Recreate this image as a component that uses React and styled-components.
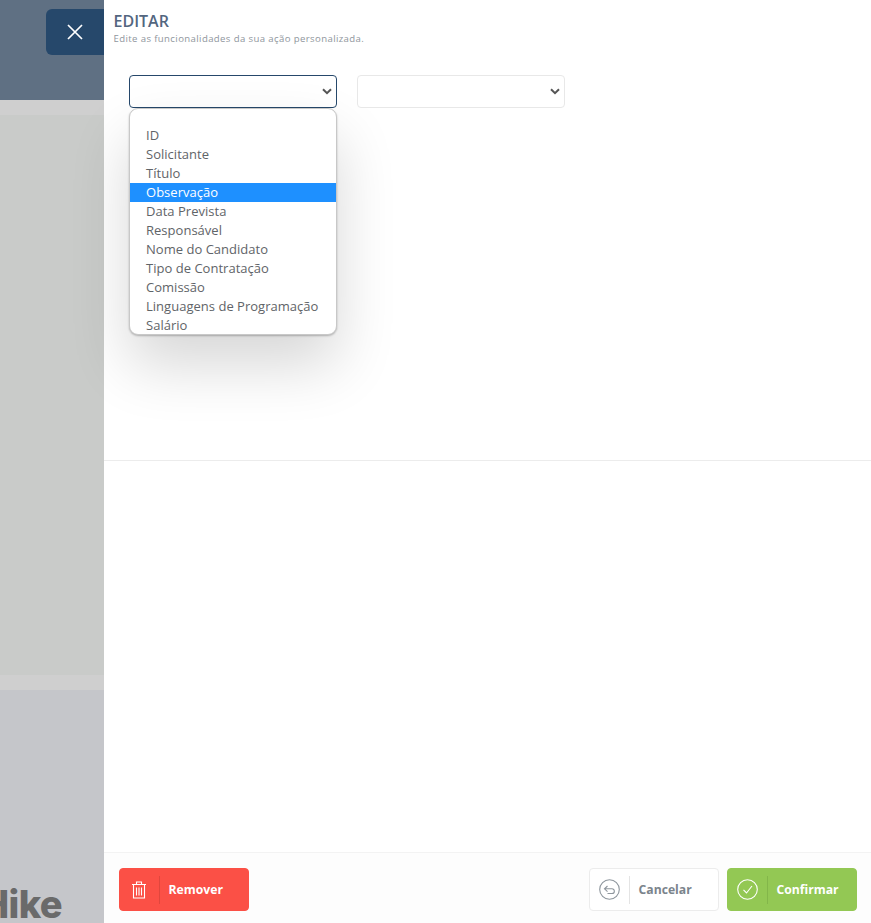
import React from "react";
import styled, { createGlobalStyle } from "styled-components";

const Global = createGlobalStyle`
  html, body { margin: 0; padding: 0; background: #fff; }
  body { font-family: "Open Sans", "Noto Sans", sans-serif; }
`;

const Page = styled.div`
  position: relative;
  width: 871px;
  height: 923px;
  display: flex;
  overflow: hidden;
`;

const Backdrop = styled.div`
  width: 104px;
  flex: none;
  display: flex;
  flex-direction: column;
  overflow: hidden;
`;

const Band = styled.div`
  height: ${(p) => p.$h}px;
  flex: ${(p) => (p.$h ? "none" : "1")};
  background: ${(p) => p.$c};
  display: flex;
  align-items: flex-end;
  justify-content: flex-end;
  overflow: hidden;
`;

const Logo = styled.span`
  font-family: "Inter", "Open Sans", sans-serif;
  font-weight: 800;
  font-size: 38px;
  line-height: 30px;
  letter-spacing: -0.6px;
  color: #6a6a6a;
  margin-right: 42px;
  margin-bottom: 4px;
  white-space: nowrap;
`;

const CloseButton = styled.button`
  position: absolute;
  left: 46px;
  top: 9px;
  width: 58px;
  height: 46px;
  padding: 0;
  border: 0;
  border-radius: 6px 0 0 6px;
  background: #26486b;
  display: flex;
  align-items: center;
  justify-content: center;
`;

const Panel = styled.main`
  flex: 1;
  display: flex;
  flex-direction: column;
  background: #fff;
  min-width: 0;
`;

const Header = styled.header`
  padding: 11px 10px 0 9.5px;
  height: 64px;
  box-sizing: border-box;
  flex: none;
`;

const Title = styled.h1`
  margin: 0;
  font-size: 16px;
  line-height: 20px;
  font-weight: 600;
  color: #53667f;
`;

const Subtitle = styled.p`
  margin: 1px 0 0;
  font-size: 9.6px;
  line-height: 13px;
  letter-spacing: 0.38px;
  color: #8f969d;
`;

const Editor = styled.section`
  height: 397px;
  flex: none;
  box-sizing: border-box;
  padding: 11px 25px 0;
  border-bottom: 1px solid #ececec;
  display: flex;
  gap: 20px;
  align-items: flex-start;
`;

const Field = styled.div`
  position: relative;
  width: 208px;
  flex: none;
`;

const Select = styled.select`
  display: block;
  width: 100%;
  height: 33px;
  box-sizing: border-box;
  appearance: none;
  background-color: #fff;
  border: 1px solid ${(p) => (p.$open ? "#26486b" : "#e8e8e8")};
  border-radius: 4px;
  font-family: inherit;
  font-size: 14px;
  color: #555;
  outline: none;
`;

const Chevron = styled.svg`
  position: absolute;
  right: 5px;
  top: 13px;
  width: 10px;
  height: 7px;
  pointer-events: none;
`;

const Menu = styled.ul`
  position: absolute;
  left: 0;
  top: 33px;
  width: 208px;
  height: 227px;
  box-sizing: border-box;
  margin: 0;
  padding: 17px 0 0;
  list-style: none;
  background: #fff;
  border: 1px solid #c8c8c8;
  border-radius: 9px;
  overflow: hidden;
  box-shadow: 0 1px 2px rgba(0, 0, 0, 0.25), 0 30px 60px rgba(0, 0, 0, 0.16);
`;

const Option = styled.li`
  height: 19px;
  line-height: 19px;
  padding-left: 16px;
  font-size: 13px;
  letter-spacing: 0.02px;
  white-space: nowrap;
  color: ${(p) => (p.$active ? "#fff" : "#5f6468")};
  background: ${(p) => (p.$active ? "#1e90ff" : "transparent")};
`;

const Spacer = styled.div`
  flex: 1;
`;

const Footer = styled.footer`
  height: 71px;
  flex: none;
  box-sizing: border-box;
  padding: 15px 14px 12px 15px;
  background: #fdfdfd;
  border-top: 1px solid #f3f3f3;
  display: flex;
  gap: 8px;
`;

const Action = styled.button`
  width: 130px;
  height: 43px;
  box-sizing: border-box;
  padding: 0;
  border-radius: 4px;
  border: 1px solid ${(p) => p.$border};
  background: ${(p) => p.$bg};
  color: ${(p) => p.$fg};
  font-family: inherit;
  font-size: 12.2px;
  font-weight: 700;
  display: flex;
  align-items: center;
  margin-left: ${(p) => (p.$push ? "auto" : "0")};
`;

const IconSlot = styled.span`
  width: 40px;
  height: 28px;
  flex: none;
  box-sizing: border-box;
  border-right: 1px solid ${(p) => p.$line};
  display: flex;
  align-items: center;
  justify-content: center;
`;

const TrashIcon = styled.svg`
  margin-right: 1px;
`;

const ActionLabel = styled.span`
  padding-left: 8.5px;
  padding-bottom: 1px;
`;

const options = [
  "ID",
  "Solicitante",
  "Título",
  "Observação",
  "Data Prevista",
  "Responsável",
  "Nome do Candidato",
  "Tipo de Contratação",
  "Comissão",
  "Linguagens de Programação",
  "Salário",
];

const ChevronIcon = () => (
  <Chevron viewBox="0 0 10 7" fill="none" stroke="#555" strokeWidth="2">
    <path d="M1 1.2l4 4 4-4" />
  </Chevron>
);

export default function App() {
  return (
    <Page>
      <Global />
      <Backdrop>
        <Band $h={100} $c="#5f7083" />
        <Band $h={15} $c="#cfcfcf" />
        <Band $h={560} $c="#c9cbc9" />
        <Band $h={15} $c="#cfcfcf" />
        <Band $c="#c5c6ca">
          <Logo>Hike</Logo>
        </Band>
      </Backdrop>
      <CloseButton aria-label="Fechar">
        <svg width="18" height="18" viewBox="0 0 18 18" fill="none" stroke="#fff" strokeWidth="1.7">
          <path d="M2 2l14 14M16 2L2 16" />
        </svg>
      </CloseButton>
      <Panel>
        <Header>
          <Title>EDITAR</Title>
          <Subtitle>Edite as funcionalidades da sua ação personalizada.</Subtitle>
        </Header>
        <Editor>
          <Field>
            <Select $open aria-label="Campo">
              <option></option>
            </Select>
            <ChevronIcon />
            <Menu>
              {options.map((o) => (
                <Option key={o} $active={o === "Observação"}>
                  {o}
                </Option>
              ))}
            </Menu>
          </Field>
          <Field>
            <Select aria-label="Valor">
              <option></option>
            </Select>
            <ChevronIcon />
          </Field>
        </Editor>
        <Spacer />
        <Footer>
          <Action $bg="#fb5046" $border="#fb5046" $fg="#fff">
            <IconSlot $line="#e0463d">
              <TrashIcon width="16" height="20" viewBox="0 0 16 20" fill="none" stroke="#fff" strokeWidth="1.1">
                <path d="M1 4.5h14M5.5 4.5V2h5v2.5M2.5 4.5v13.5h11V4.5M5.5 7.5v8M8 7.5v8M10.5 7.5v8" />
              </TrashIcon>
            </IconSlot>
            <ActionLabel>Remover</ActionLabel>
          </Action>
          <Action $push $bg="#fff" $border="#ececec" $fg="#7b848c">
            <IconSlot $line="#e4e4e4">
              <svg width="21" height="21" viewBox="0 0 21 21" fill="none" stroke="#8e969d" strokeWidth="1.1">
                <circle cx="10.5" cy="10.5" r="9.8" />
                <path d="M8.5 7L5.5 9.8l3 2.8M5.5 9.8h7.5a2.3 2.3 0 0 1 0 4.7H8.5" />
              </svg>
            </IconSlot>
            <ActionLabel>Cancelar</ActionLabel>
          </Action>
          <Action $bg="#93c854" $border="#93c854" $fg="#fff">
            <IconSlot $line="#83b64a">
              <svg width="21" height="21" viewBox="0 0 21 21" fill="none" stroke="#fff" strokeWidth="1.1">
                <circle cx="10.5" cy="10.5" r="9.8" />
                <path d="M6.5 10.8l3 3.2 5.5-7" />
              </svg>
            </IconSlot>
            <ActionLabel>Confirmar</ActionLabel>
          </Action>
        </Footer>
      </Panel>
    </Page>
  );
}
